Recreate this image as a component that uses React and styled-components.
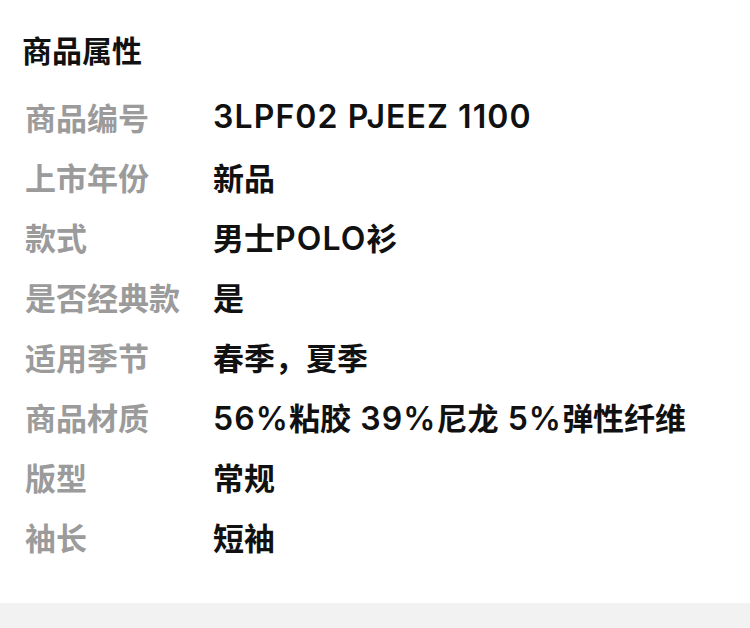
import styled, { createGlobalStyle } from "styled-components"

const GlobalStyle = createGlobalStyle`
  body {
    margin: 0;
    background: #ffffff;
    font-family: Inter, "Noto Sans CJK SC", "Noto Sans", sans-serif;
  }
`

const Section = styled.section`
  background: #ffffff;
  padding: 21px 0 37px;
`

const Title = styled.h2`
  margin: 0 0 5px;
  padding-left: 22px;
  font-size: 30px;
  line-height: 60px;
  font-weight: 700;
  color: #111111;
`

const List = styled.div`
  display: flex;
  flex-direction: column;
`

const Row = styled.div`
  display: grid;
  grid-template-columns: 188px 1fr;
  height: 60px;
  align-items: center;
  padding-left: 25px;
  font-size: 31px;
`

const Label = styled.span`
  color: #9b9b9b;
  font-weight: 700;
`

const Value = styled.span`
  color: #111111;
  font-weight: 600;
  white-space: nowrap;
`

// latin runs render a touch wider than the CJK text around them
const Latin = styled.span`
  font-size: 32px;
  letter-spacing: 1.1px;
`

const Footer = styled.div`
  height: 25px;
  background: #f2f2f2;
`

const attrs = [
  ["商品编号", "3LPF02 PJEEZ 1100"],
  ["上市年份", "新品"],
  ["款式", "男士POLO衫"],
  ["是否经典款", "是"],
  ["适用季节", "春季，夏季"],
  ["商品材质", "56%粘胶 39%尼龙 5%弹性纤维"],
  ["版型", "常规"],
  ["袖长", "短袖"],
]

const renderValue = (text) =>
  text
    .split(/([A-Za-z0-9% ]+)/)
    .filter(Boolean)
    .map((part, i) =>
      /[A-Za-z0-9%]/.test(part) ? <Latin key={i}>{part}</Latin> : part
    )

const App = () => {
  return (
    <>
      <GlobalStyle />
      <Section>
        <Title>商品属性</Title>
        <List>
          {attrs.map(([label, value]) => (
            <Row key={label}>
              <Label>{label}</Label>
              <Value>{renderValue(value)}</Value>
            </Row>
          ))}
        </List>
      </Section>
      <Footer />
    </>
  )
}

export default App
